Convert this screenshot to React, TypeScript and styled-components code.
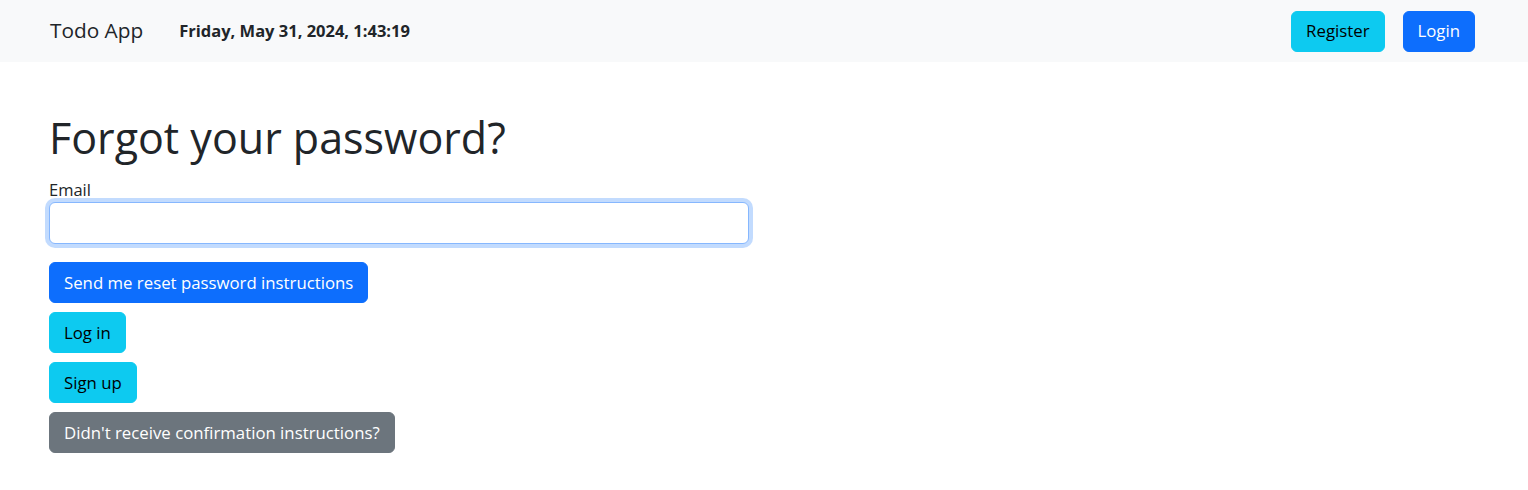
import React from 'react'
import styled, { createGlobalStyle } from 'styled-components'

const GlobalStyle = createGlobalStyle`
  * { box-sizing: border-box; }
  body {
    margin: 0;
    background: #fff;
    color: #212529;
    font-family: "Open Sans", "Noto Sans", sans-serif;
    font-size: 16px;
    line-height: 1.5;
  }
`

const Navbar = styled.nav`
  height: 62px;
  background: #f8f9fa;
  display: flex;
  align-items: center;
  justify-content: space-between;
  padding: 0 53px 0 50px;
`

const NavLeft = styled.div`
  display: flex;
  align-items: center;
  gap: 36px;
`

const Brand = styled.a`
  font-size: 20.8px;
  color: #212529;
  text-decoration: none;
`

const Clock = styled.span`
  font-weight: 700;
  font-size: 16.5px;
`

const NavRight = styled.div`
  display: flex;
  gap: 18px;
`

const variants = {
  primary: { bg: '#0d6efd', fg: '#fff' },
  info: { bg: '#0dcaf0', fg: '#000' },
  secondary: { bg: '#6c757d', fg: '#fff' },
}

const Button = styled.button<{ $variant: keyof typeof variants }>`
  font-family: inherit;
  font-size: 16.8px;
  line-height: 24px;
  height: 41px;
  padding: 0 14px;
  border: 1px solid ${p => variants[p.$variant].bg};
  border-radius: 6px;
  background: ${p => variants[p.$variant].bg};
  color: ${p => variants[p.$variant].fg};
  cursor: pointer;
`

const Main = styled.main`
  padding: 52px 49px 0;
  display: flex;
  flex-direction: column;
  align-items: flex-start;
`

const Title = styled.h1`
  margin: 0 0 16px;
  font-size: 43px;
  font-weight: 400;
  line-height: 48px;
`

const Form = styled.form`
  display: flex;
  flex-direction: column;
  align-items: flex-start;
  width: 700px;
`

const Label = styled.label`
  display: block;
  font-size: 16.5px;
  line-height: 24px;
`

const Input = styled.input`
  width: 700px;
  height: 42px;
  margin-bottom: 18px;
  padding: 6px 12px;
  font-family: inherit;
  font-size: 16px;
  border: 1px solid #86b7fe;
  border-radius: 6px;
  box-shadow: 0 0 0 4px rgba(13, 110, 253, 0.25);
  outline: none;
`

const Actions = styled.div`
  display: flex;
  flex-direction: column;
  align-items: flex-start;
  gap: 9px;
`

export default function App() {
  return (
    <>
      <GlobalStyle />
      <Navbar>
        <NavLeft>
          <Brand href="#">Todo App</Brand>
          <Clock>Friday, May 31, 2024, 1:43:19</Clock>
        </NavLeft>
        <NavRight>
          <Button $variant="info">Register</Button>
          <Button $variant="primary">Login</Button>
        </NavRight>
      </Navbar>
      <Main>
        <Title>Forgot your password?</Title>
        <Form>
          <Label htmlFor="email">Email</Label>
          <Input id="email" type="email" />
          <Actions>
            <Button $variant="primary" type="button">Send me reset password instructions</Button>
            <Button $variant="info" type="button">Log in</Button>
            <Button $variant="info" type="button">Sign up</Button>
            <Button $variant="secondary" type="button">Didn't receive confirmation instructions?</Button>
          </Actions>
        </Form>
      </Main>
    </>
  )
}
